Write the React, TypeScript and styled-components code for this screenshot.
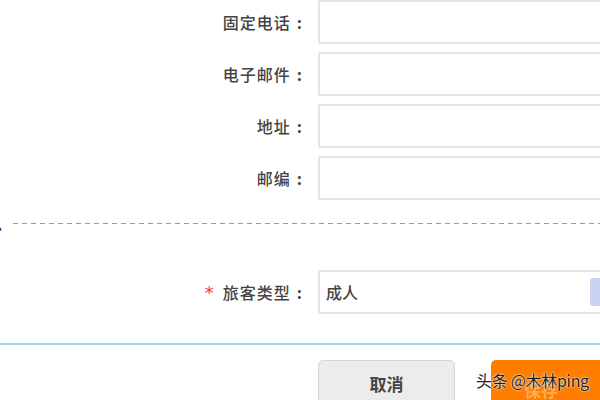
import React from 'react';
import styled, { createGlobalStyle } from 'styled-components';

const GlobalStyle = createGlobalStyle`
    html, body {
        margin: 0;
        padding: 0;
        background: #fff;
    }
    body {
        font-family: "Noto Sans CJK SC", "Liberation Sans", sans-serif;
    }
`;

const Page = styled.div`
    position: relative;
    width: 600px;
    height: 400px;
    overflow: hidden;
    background: #fff;
    display: flex;
    flex-direction: column;
`;

const FieldList = styled.div`
    display: flex;
    flex-direction: column;
    gap: 8px;
`;

const FieldRow = styled.div<{ $top?: number }>`
    display: flex;
    align-items: center;
    gap: 14px;
    height: 44px;
    flex: none;
    margin-top: ${(p) => p.$top || 0}px;
`;

const Label = styled.div`
    width: 304px;
    flex: none;
    display: flex;
    justify-content: flex-end;
    align-items: center;
    color: #444;
    font-size: 16px;
    font-weight: 500;
    letter-spacing: 1px;
    white-space: nowrap;
`;

const Colon = styled.span`
    font-weight: 700;
    margin-left: 6px;
    margin-right: 1px;
`;

const Required = styled.span`
    color: #f23a3a;
    font-size: 18px;
    margin-right: 8px;
    font-family: "DejaVu Sans", sans-serif;
`;

const TextInput = styled.div`
    flex: none;
    box-sizing: border-box;
    width: 300px;
    height: 44px;
    border: 2px solid #e3e3e3;
    border-radius: 2px;
    background: #fff;
`;

const Select = styled(TextInput)`
    display: flex;
    align-items: center;
    justify-content: space-between;
    padding: 0 4px 0 6px;
    color: #444;
    font-size: 16px;
    font-weight: 500;
`;

const SelectArrow = styled.div`
    width: 20px;
    height: 28px;
    border-radius: 3px;
    background: #cbd3f2;
    margin-right: 2px;
`;

const Divider = styled.div`
    display: flex;
    align-items: center;
    height: 16px;
    margin-top: 15px;
    flex: none;
`;

const SectionTail = styled.span`
    font-size: 16px;
    color: #222;
    margin-left: -14px;
    width: 16px;
    line-height: 16px;
    font-weight: 700;
`;

const DashLine = styled.div`
    flex: 1;
    height: 1px;
    margin-left: 11px;
    background-image: repeating-linear-gradient(to right, #9a9a9a 0 5px, transparent 5px 9px);
`;

const BlueRule = styled.div`
    height: 2px;
    flex: none;
    margin-top: 29px;
    background: #9fd6ef;
`;

const ButtonRow = styled.div`
    display: flex;
    gap: 36px;
    padding-left: 318px;
    margin-top: 15px;
    flex: none;
`;

const CancelButton = styled.button`
    flex: none;
    box-sizing: border-box;
    width: 137px;
    height: 46px;
    border: 1px solid #d6d6d6;
    border-radius: 5px;
    background: #ececec;
    color: #444;
    font-family: inherit;
    font-size: 17px;
    font-weight: 700;
    padding: 0;
`;

const PrimaryButton = styled.button`
    flex: none;
    box-sizing: border-box;
    width: 140px;
    height: 46px;
    border: none;
    border-radius: 5px 0 0 0;
    background: #ff7e00;
    color: rgba(255, 255, 255, 0.35);
    font-family: inherit;
    font-size: 17px;
    font-weight: 700;
    padding: 12px 40px 0 0;
`;

const Watermark = styled.div`
    position: absolute;
    left: 476px;
    top: 368px;
    color: #1e1e1e;
    font-size: 16px;
    letter-spacing: -0.3px;
    font-family: "Noto Sans CJK SC", "Liberation Sans", sans-serif;
    text-shadow: 0 0 2px #fff, 0 0 1px #fff;
    white-space: nowrap;
`;

const contactFields = ['固定电话', '电子邮件', '地址', '邮编'];

export default function App() {
    return (
        <Page>
            <GlobalStyle />
            <FieldList>
                {contactFields.map((label) => (
                    <FieldRow key={label}>
                        <Label>
                            {label}
                            <Colon>:</Colon>
                        </Label>
                        <TextInput />
                    </FieldRow>
                ))}
            </FieldList>
            <Divider>
                <SectionTail>息</SectionTail>
                <DashLine />
            </Divider>
            <FieldRow $top={39}>
                <Label>
                    <Required>*</Required>旅客类型<Colon>:</Colon>
                </Label>
                <Select>
                    <span>成人</span>
                    <SelectArrow />
                </Select>
            </FieldRow>
            <BlueRule />
            <ButtonRow>
                <CancelButton>取消</CancelButton>
                <PrimaryButton>保存</PrimaryButton>
            </ButtonRow>
            <Watermark>头条 @木林ping</Watermark>
        </Page>
    );
}
